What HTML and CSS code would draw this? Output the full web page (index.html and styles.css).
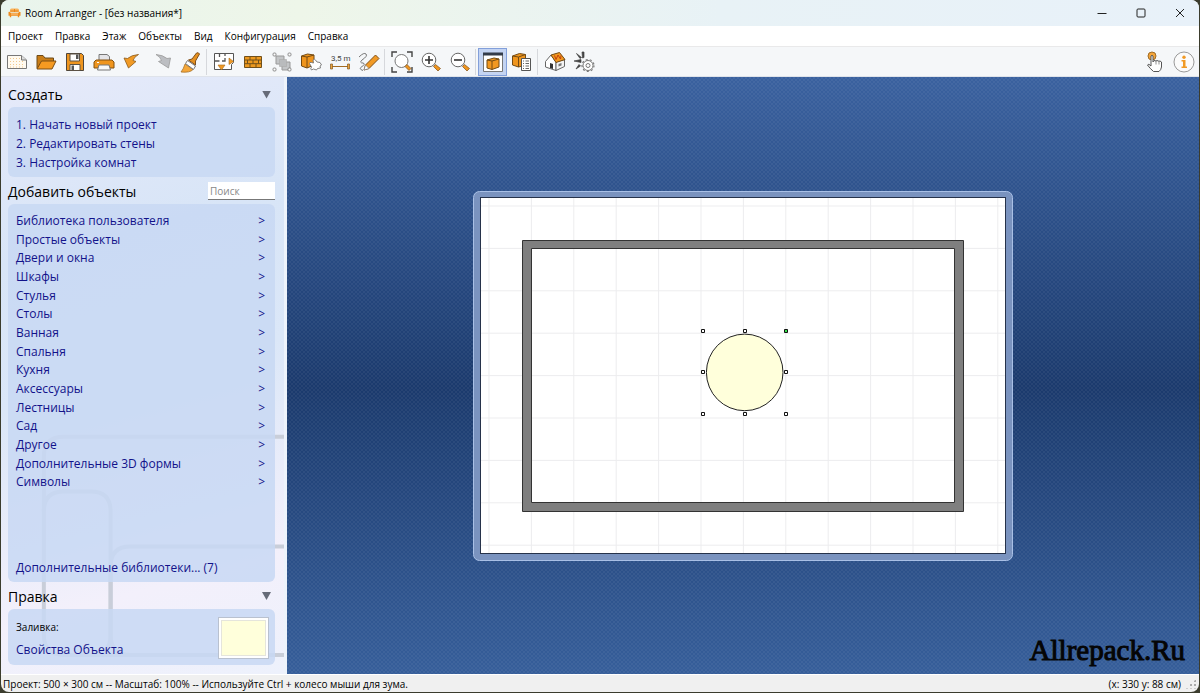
FILE: index.html
```html
<!DOCTYPE html>
<html lang="ru">
<head>
<meta charset="utf-8">
<title>Room Arranger - [без названия*]</title>
<link rel="stylesheet" href="styles.css">
</head>
<body>
<div class="window">
  <header class="titlebar">
    <svg class="app-icon" viewBox="0 0 13 10" aria-hidden="true"><path d="M2 4V2q0-1.500 1.500-1.500h6q1.500 0 1.500 1.500v2z" fill="#f8b25c"/><path d="M2.500 3h8M6.500 1v3" stroke="#e8861a" fill="none"/><path d="M.5 4q1.500-1 2 .8h8q.5-1.800 2-.8v3.800h-1.300v1.500h-1.400V7.800H3.200v1.500H1.800V7.800H.5z" fill="#ee8a1c"/><path d="M3 6h7" stroke="#ffd092"/></svg>
    <h1 class="title">Room Arranger - [без названия*]</h1>
    <div class="window-controls">
      <button class="wc" aria-label="Свернуть"><svg viewBox="0 0 10 10"><path d="M.5 5.500h9"/></svg></button>
      <button class="wc" aria-label="Развернуть"><svg viewBox="0 0 10 10"><rect x="1" y="1" width="8" height="8" rx="1"/></svg></button>
      <button class="wc" aria-label="Закрыть"><svg viewBox="0 0 10 10"><path d="M1 1l8 8M9 1L1 9"/></svg></button>
    </div>
  </header>

  <nav class="menubar" aria-label="Главное меню">
    <button>Проект</button><button>Правка</button><button>Этаж</button><button>Объекты</button><button>Вид</button><button>Конфигурация</button><button>Справка</button>
  </nav>

  <div class="toolbar" role="toolbar" aria-label="Инструменты">
    <button class="tool" aria-label="Новый"><svg viewBox="0 0 22 22"><path d="M1.500 4.500h14l5 4.500v8.500h-19z" fill="#fffaf0" stroke="#777"/><path d="M4 7.500h11M4 10.500h15M4 13.500h15M4 16h15" stroke="#f3c98c" stroke-dasharray="1 2"/><path d="M15.500 4.500V9h5" fill="#ddd" stroke="#777"/></svg></button>
    <button class="tool" aria-label="Открыть"><svg viewBox="0 0 22 22"><path d="M2 17.500V4.500h6l2 2.500h8.500v3" fill="#c97d17" stroke="#6d4a19"/><path d="M2 18l4.500-8H21l-4 8z" fill="#f59a22" stroke="#7b4d12"/></svg></button>
    <button class="tool" aria-label="Сохранить"><svg viewBox="0 0 22 22"><path d="M2.500 2.500h15l2 2v15h-17z" fill="#ee951f" stroke="#4f463b"/><path d="M6 3h9.500v7H6zM6 13.500h10v6H6z" fill="#fff" stroke="#5b5144"/><path d="M12 3.500h2.500V8H12zM7.500 14.500h2.500v4.500H7.500z" fill="#555"/></svg></button>
    <button class="tool" aria-label="Печать"><svg viewBox="0 0 22 22"><path d="M6 10V3.500h8l2.500 2V10z" fill="#e4e4e8" stroke="#777"/><path d="M3 9h16l2 2v6H1v-6z" fill="#ef951e" stroke="#84500f"/><path d="M6 14h10l1.500 5h-13z" fill="#f8f8f8" stroke="#777"/><path d="M4 11.500h2" stroke="#fff"/></svg></button>
    <button class="tool" aria-label="Отменить"><svg viewBox="0 0 22 22"><path d="M2 7l3.500.5Q9.500 4 16.500 3.500 12 6 11 9.500l3 1L6.500 17z" fill="#f19a25" stroke="#8a5b1c" stroke-width=".8"/></svg></button>
    <button class="tool" aria-label="Повторить"><svg viewBox="0 0 22 22"><path d="M19.500 7l-3.500.5Q12 4 5 3.500 9.500 6 10.500 9.500l-3 1 10 6.500z" fill="#bcbec2" stroke="#999" stroke-width=".8"/></svg></button>
    <button class="tool" aria-label="Кисть"><svg viewBox="0 0 22 22"><path d="M1 21q2.500-3 4-8l8 5.500q-3 3.500-12 2.500z" fill="#f4a73a" stroke="#9d671d" stroke-width=".7"/><path d="M5.500 12.500l2-3 8 5.500-2 3.500z" fill="#fff" stroke="#777"/><path d="M8.500 9l3.500-1 4.500-6q2-1 3 1l-4 7v4z" fill="#e5901f" stroke="#80501a"/></svg></button>
    <span class="sep"></span>
    <button class="tool" aria-label="План"><svg viewBox="0 0 22 22"><path d="M1.500 2.500h19v9l-2 2v5h-17z" fill="#fff" stroke="#555"/><path d="M1.500 10h5M9 10h3V7M12 2.500V5M6.500 2.500V6" fill="none" stroke="#555" stroke-width="1.300"/><path d="M5 14h7l-3.500 5zM16 7l4.500 3.500-4.500 3z" fill="#f19a25" stroke="#a66a18" stroke-width=".6"/></svg></button>
    <button class="tool" aria-label="Стены"><svg viewBox="0 0 22 22"><path d="M2.500 5.500h17v11h-17z" fill="#ed991f" stroke="#71501b"/><path d="M3 9h16M3 12.700h16M8 5.500V9M14 5.500V9M5.500 9v3.700M11 9v3.700M16.500 9v3.700M8 12.700v4M14 12.700v4" stroke="#71501b" fill="none"/></svg></button>
    <button class="tool" aria-label="Группа"><svg viewBox="0 0 22 22"><path d="M5 5h8v6h6v8h-8v-6H5z" fill="#c3c5c7" stroke="#999"/><path d="M8.500 8.500h7v7h-7z" fill="#b9bbbd" stroke="#aaa" stroke-width=".6"/><g fill="#fff" stroke="#777" stroke-width=".8"><rect x="2" y="2" width="3" height="3" rx="1"/><rect x="17" y="2" width="3" height="3" rx="1"/><rect x="2" y="17" width="3" height="3" rx="1"/><rect x="17" y="17" width="3" height="3" rx="1"/></g></svg></button>
    <button class="tool" aria-label="Добавить объект"><svg viewBox="0 0 22 22"><path d="M1.500 5l6-2 6.500 1v10l-7 3-5.500-2z" fill="#ef951e" stroke="#744b13"/><path d="M1.500 5l5.500 1 7-2M7 6v11" fill="none" stroke="#744b13"/><path d="M9.500 12.500q0-1.500 2-1l2 .5-.5-3q1.500-1.500 2.500 0l1.500 2 3 .5 1.500 2.500-1.500 1 .5 2-3 .5-1 1.500-3-1-2 1q-1.500-1 0-3z" fill="#fff" stroke="#777" stroke-width=".9"/></svg></button>
    <button class="tool" aria-label="Размер"><svg viewBox="0 0 22 22"><text class="measure" x="2" y="10">3,5 m</text><path d="M3 15.500h16" stroke="#a36c24"/><path d="M1.500 13h2v5h-2zM18.500 13h2v5h-2z" fill="#efa33c" stroke="#815a22" stroke-width=".7"/></svg></button>
    <button class="tool" aria-label="Карандаш"><svg viewBox="0 0 22 22"><path d="M1 6q5-5 7-3t-4 6q-3 3 1 3 3 1-1 3.500t1 4" fill="none" stroke="#777"/><path d="M6 19l1.500-5L17.500 4l3.500 3.500L11 17.500z" fill="#f19a25" stroke="#805018"/><path d="M6 19l1.500-5 3.500 3.500z" fill="#fff" stroke="#777" stroke-width=".6"/></svg></button>
    <span class="sep"></span>
    <button class="tool" aria-label="Весь план"><svg viewBox="0 0 22 22"><path d="M1 6V1h5M16 1h5v5M21 16v5h-5M6 21H1v-5" fill="none" stroke="#444" stroke-width="1.400"/><circle cx="10.500" cy="10" r="6.500" fill="#fff" stroke="#777"/><path d="M14 15.500l2-2 4 4-2 2z" fill="#ef951e" stroke="#80501a" stroke-width=".7"/></svg></button>
    <button class="tool" aria-label="Увеличить"><svg viewBox="0 0 22 22"><circle cx="9" cy="9" r="6.800" fill="#fff" stroke="#666"/><path d="M9 5v8M5 9h8" stroke="#333" stroke-width="1.600"/><path d="M13.500 15.500l2-2 5 4-2.500 2.500z" fill="#ef951e" stroke="#80501a" stroke-width=".7"/></svg></button>
    <button class="tool" aria-label="Уменьшить"><svg viewBox="0 0 22 22"><circle cx="9" cy="9" r="6.800" fill="#fff" stroke="#666"/><path d="M5 9h8" stroke="#333" stroke-width="1.600"/><path d="M13.500 15.500l2-2 5 4-2.500 2.500z" fill="#ef951e" stroke="#80501a" stroke-width=".7"/></svg></button>
    <span class="sep"></span>
    <button class="tool active" aria-pressed="true" aria-label="Панель объектов"><svg viewBox="0 0 22 22"><path d="M1.500 2.500h19v18h-19z" fill="#fff" stroke="#777"/><path d="M1 1.500h20v3H1z" fill="#333b49"/><path d="M5 9l7-2 5 1v8l-7 2.500L5 17z" fill="#f29820" stroke="#744b13"/><path d="M5 9l5 1 7-2M10 10v8.500" fill="none" stroke="#744b13"/></svg></button>
    <button class="tool" aria-label="Список объектов"><svg viewBox="0 0 22 22"><path d="M1.500 5l7-2.500 6 1V14l-7 2-6-2z" fill="#ef951e" stroke="#744b13"/><path d="M1.500 5l6 1 7-2.500M7.500 6v10" fill="none" stroke="#744b13"/><path d="M10.500 7.500h9v12h-9z" fill="#fff" stroke="#555"/><path d="M12 10h1M14.500 10H18M12 12.500h1M14.500 12.500H18M12 15h1M14.500 15H18M12 17.500h1M14.500 17.500H18" stroke="#666"/></svg></button>
    <span class="sep"></span>
    <button class="tool" aria-label="3D вид"><svg viewBox="0 0 22 22"><path d="M1.500 10.500L7 4l5 7v8.500l-10.500-3.500z" fill="#fff" stroke="#666"/><path d="M12 11l8.500-2.500v7L12 19.500z" fill="#f3f3f3" stroke="#666"/><path d="M7 4l8.500-2.500 5.500 7-9 3z" fill="#f29820" stroke="#744b13"/><path d="M10.500 4.500l1.500 4 2-4.500 2.500 4 .5-3.500" fill="none" stroke="#c2410c"/><path d="M6 12l3 1v5l-3-1z" fill="#333"/><path d="M14.500 13l3-1v2.500l-3 1z" fill="#777"/></svg></button>
    <button class="tool" aria-label="Настройка 3D"><svg viewBox="0 0 22 22"><path d="M1 10l7-1.500v3zM3.500 2.500l5 4-1.500 1zM9 1h2v5.500L9.500 7zM3 18l3-4.500 1.500 1.500z" fill="#444" stroke="#444" stroke-width=".7"/><circle cx="15" cy="14.500" r="5" fill="#fff" stroke="#777"/><circle cx="15" cy="14.500" r="6" fill="none" stroke="#777" stroke-width="1.200" stroke-dasharray="2 2.200"/><circle cx="15" cy="14.500" r="2" fill="#fff" stroke="#777"/></svg></button>
    <span class="spacer"></span>
    <button class="tool" aria-label="Касание"><svg viewBox="0 0 22 22"><circle cx="8" cy="5" r="4" fill="#f3a43a" stroke="#a06c25"/><path d="M7 14V5q1-1.500 2 0v6l1-1.500 2 .5 1-.5 2 .8 1-.3 1.500 1v5q-.5 3-2.500 4.500H9.500Q6 17.500 3.500 14q1-2 3.500 1z" fill="#fff" stroke="#555"/><path d="M12 10v3.500M15 10.500v3" stroke="#777" stroke-width=".8"/></svg></button>
    <button class="tool" aria-label="Информация"><svg viewBox="0 0 22 22"><circle cx="11" cy="11" r="10" fill="#fbfbfb" stroke="#999"/><circle cx="11" cy="6.300" r="1.700" fill="#f19a25"/><path d="M8.500 9h4v6.500h1.500V17H8.500v-1.500H10v-5H8.500z" fill="#f19a25"/></svg></button>
  </div>

  <main class="content">
    <aside class="sidebar">
      <svg class="backdrop" viewBox="0 0 284 597" aria-hidden="true"><g fill="none" stroke="#c9ced9" stroke-width="4"><path d="M284 360H63q-20 0-20 20v179q0 20 20 20h221"/><path d="M43 435q0-20 20-20h27q20 0 20 20v124q0 20-20 20"/><path d="M284 470H130q-20 0-20 20v69q0 20 20 20"/></g></svg>

      <section class="section">
        <div class="head"><h2>Создать</h2><button class="fold" aria-label="Свернуть раздел"></button></div>
        <ul class="panel steps">
          <li><a href="#new">1. Начать новый проект</a></li>
          <li><a href="#walls">2. Редактировать стены</a></li>
          <li><a href="#rooms">3. Настройка комнат</a></li>
        </ul>
      </section>

      <section class="section grow">
        <div class="head"><h2>Добавить объекты</h2><input class="search" type="text" placeholder="Поиск" aria-label="Поиск"></div>
        <div class="panel library">
          <ul class="cats">
            <li><a href="#c1">Библиотека пользователя<span>&gt;</span></a></li>
            <li><a href="#c2">Простые объекты<span>&gt;</span></a></li>
            <li><a href="#c3">Двери и окна<span>&gt;</span></a></li>
            <li><a href="#c4">Шкафы<span>&gt;</span></a></li>
            <li><a href="#c5">Стулья<span>&gt;</span></a></li>
            <li><a href="#c6">Столы<span>&gt;</span></a></li>
            <li><a href="#c7">Ванная<span>&gt;</span></a></li>
            <li><a href="#c8">Спальня<span>&gt;</span></a></li>
            <li><a href="#c9">Кухня<span>&gt;</span></a></li>
            <li><a href="#c10">Аксессуары<span>&gt;</span></a></li>
            <li><a href="#c11">Лестницы<span>&gt;</span></a></li>
            <li><a href="#c12">Сад<span>&gt;</span></a></li>
            <li><a href="#c13">Другое<span>&gt;</span></a></li>
            <li><a href="#c14">Дополнительные 3D формы<span>&gt;</span></a></li>
            <li><a href="#c15">Символы<span>&gt;</span></a></li>
          </ul>
          <a class="more" href="#libs">Дополнительные библиотеки... (7)</a>
        </div>
      </section>

      <section class="section">
        <div class="head"><h2>Правка</h2><button class="fold" aria-label="Свернуть раздел"></button></div>
        <div class="panel edit">
          <div class="edit-text"><span class="fill-label" id="fill">Заливка:</span><a href="#props">Свойства Объекта</a></div>
          <button class="swatch" aria-labelledby="fill"></button>
        </div>
      </section>
    </aside>

    <div class="workspace">
      <svg class="plan" width="540" height="371" viewBox="0 0 540 371" role="img" aria-label="План комнаты">
        <defs><pattern id="grid" x="15.500" y="15.500" width="42.400" height="42.400" patternUnits="userSpaceOnUse"><path d="M.5 0v42.400M0 .5h42.400" stroke="#ececee" fill="none"/></pattern></defs>
        <rect x=".5" y="1.500" width="539" height="369" rx="6" fill="#7a93bf" stroke="#a9c0e6"/>
        <rect x="7.500" y="7.500" width="525" height="356" fill="#fff" stroke="#26324a"/>
        <rect x="8" y="8" width="524" height="355" fill="url(#grid)"/>
        <path d="M49.500 50.500h441v271h-441zM58.500 58.500v254h423v-254z" fill="#7f7f7f" stroke="#333" fill-rule="evenodd"/>
        <circle cx="271.700" cy="182.400" r="38.300" fill="#ffffdb" stroke="#222"/>
        <g fill="#fff" stroke="#111"><path d="M228.500 139.500h3v3h-3zM270.500 139.500h3v3h-3zM228.500 180.500h3v3h-3zM311.500 180.500h3v3h-3zM228.500 222.500h3v3h-3zM270.500 222.500h3v3h-3zM311.500 222.500h3v3h-3z"/><path d="M311.500 139.500h3v3h-3z" fill="#35e04a"/></g>
      </svg>
      <div class="watermark">Allrepack.Ru</div>
    </div>
  </main>

  <footer class="status"><span>Проект: 500 × 300 см -- Масштаб: 100% -- Используйте Ctrl + колесо мыши для зума.</span><span class="coords">(x: 330 y: 88 см)</span><span class="grip"></span></footer>
</div>
</body>
</html>
```
FILE: styles.css
```css
* { box-sizing: border-box; }
html, body { height: 100%; }
body {
  margin: 0;
  padding: 0 1px 1px;
  background: #3b3c2d;
  font-family: "Open Sans", "Noto Sans", sans-serif;
  font-size: 10px;
  color: #000;
}
button { border: 0; padding: 0; background: none; font: inherit; color: inherit; }
h1, h2, ul { margin: 0; padding: 0; font-weight: 400; list-style: none; }
a { color: #12128a; text-decoration: none; }

.window { display: flex; flex-direction: column; height: 100%; border-radius: 8px; overflow: hidden; background: #f0f0f0; }

.titlebar { display: flex; align-items: center; flex: none; height: 26px; padding-left: 7px; background: linear-gradient(90deg, #e9f4ec, #eef6e9 25%, #e8f2f6 60%, #e8f1f9); }
.app-icon { width: 13px; height: 10px; margin-right: 4px; }
.title { flex: 1; font-size: 10px; }
.window-controls { display: flex; }
.wc { display: grid; place-items: center; width: 39px; height: 26px; }
.wc svg { width: 10px; height: 10px; fill: none; stroke: #222; }

.menubar { display: flex; flex: none; gap: 12px; height: 20px; padding-left: 7px; background: #fff; }

.toolbar { display: flex; align-items: center; flex: none; height: 31px; padding: 0 1px; background: #f5f7f9; border-top: 1px solid #e9e9ea; border-bottom: 1px solid #dfe3ea; }
.tool { display: grid; place-items: center; width: 29px; height: 28px; }
.tool svg { width: 22px; height: 22px; }
.tool.active { background: #c4d4f2; border: 1px solid #829fda; }
.measure { font: 8px Roboto, sans-serif; fill: #444; }
.sep { width: 1px; height: 26px; margin: 0 2px 0 1px; background: #d6d8dc; }
.spacer { flex: 1; }

.content { display: flex; flex: 1; min-height: 0; }
.sidebar { position: relative; display: flex; flex-direction: column; flex: none; width: 286px; padding: 4px 9px 9px 7px; border-right: 3px solid #edf3fb; background: linear-gradient(165deg, #e6eafa 0, #d8e5f7 28%, #dbe7f8 50%, #f3f0fb 82%, #edf1fc); }
.backdrop { position: absolute; left: 0; bottom: 0; width: 100%; height: 597px; }
.section { position: relative; display: flex; flex-direction: column; }
.grow { flex: 1; }
.head { display: flex; align-items: center; justify-content: space-between; height: 26px; padding-top: 1px; }
.head h2 { font-size: 14px; line-height: 25px; }
.grow .head, .grow + .section .head { height: 27px; }
.fold { width: 9px; height: 8px; margin-right: 4px; background: #666b78; clip-path: polygon(0 0, 100% 0, 50% 100%); }
.search { width: 67px; height: 18px; padding: 0 2px; border: 0; border-bottom: 1px solid #777; background: #fff; font: inherit; }
.search::placeholder { color: #888; }
.panel { padding: 8px 8px 5px; border-radius: 6px; background: rgb(200 216 243 / 85%); font-size: 12px; }
.steps { display: grid; grid-auto-rows: 1fr; min-height: 70px; align-items: center; }
.library { display: flex; flex: 1; flex-direction: column; justify-content: space-between; }
.cats { display: grid; grid-auto-rows: 1fr; min-height: 280px; }
.cats a { display: flex; justify-content: space-between; line-height: 18px; }
.cats span { padding-right: 2px; }
.more { line-height: 18px; }
.edit { display: flex; justify-content: space-between; padding-bottom: 6px; }
.edit-text { display: flex; flex-direction: column; justify-content: space-between; }
.fill-label { font-size: 10px; line-height: 20px; }
.edit-text a { line-height: 18px; }
.swatch { width: 51px; height: 42px; margin-right: -2px; border: 1px solid #b9c1cf; background: #ffffdb; box-shadow: inset 0 0 0 2px #fff, inset 0 0 0 3px #e5e5dc; }

.workspace {
  position: relative;
  display: grid;
  flex: 1;
  place-items: center;
  background: repeating-conic-gradient(rgb(255 255 255 / 5%) 0 25%, transparent 0 50%) 0 0 / 4px 4px, linear-gradient(#3a619f, #1b3a6d 52%, #365e9a);
}
.watermark { position: absolute; right: 14px; bottom: 4px; font: 29px/40px "Liberation Serif", serif; color: #050505; -webkit-text-stroke: 1px #050505; }

.status { display: flex; align-items: center; flex: none; height: 18px; padding: 0 2px; border-top: 1px solid #fff; }
.coords { margin-left: auto; }
.grip { width: 12px; height: 10px; margin-left: 4px; background: radial-gradient(#aaa 1px, transparent 1px) 0 0 / 4px 4px; clip-path: polygon(100% 0, 100% 100%, 0 100%); }
```
